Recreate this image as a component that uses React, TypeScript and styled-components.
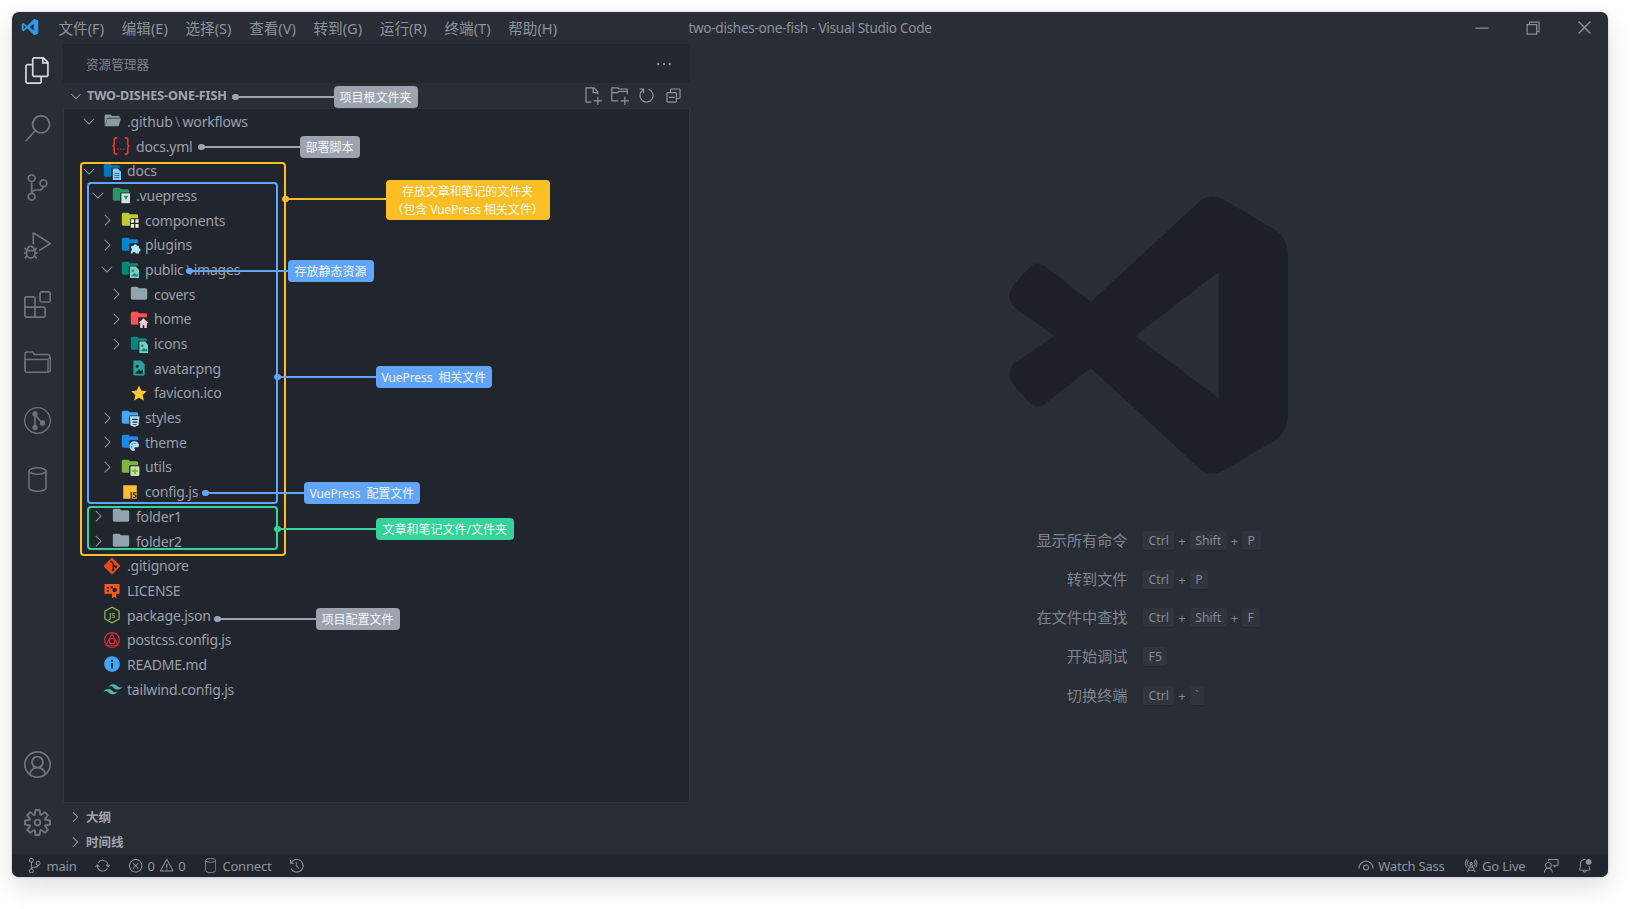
import React from "react";
import styled, { createGlobalStyle } from "styled-components";
import {
  VscFiles, VscSearch, VscSourceControl, VscDebugAlt, VscExtensions, VscAccount, VscSettingsGear,
  VscChevronRight, VscChevronDown, VscNewFile, VscNewFolder, VscRefresh, VscCollapseAll, VscEllipsis,
  VscChromeMinimize, VscChromeRestore, VscChromeClose, VscSync, VscError, VscWarning, VscHistory,
  VscRadioTower, VscFeedback, VscBellDot,
} from "react-icons/vsc";

const TREE_BG = "#21252d";
const WINDOW_BG = "#292d36";
const FONT = `"Noto Sans", "Noto Sans CJK SC", sans-serif`;

const Global = createGlobalStyle`
  html, body { margin: 0; padding: 0; background: #fff; }
  body { font-family: ${FONT}; width: 1640px; height: 909px; overflow: hidden; }
  * { box-sizing: border-box; }
`;

const Page = styled.div`
  position: relative;
  width: 1640px;
  height: 909px;
  padding: 12px 0 0 12px;
`;

const Window = styled.div`
  width: 1596px;
  height: 865px;
  display: flex;
  flex-direction: column;
  background: ${WINDOW_BG};
  border-radius: 7px;
  overflow: hidden;
  box-shadow: 0 10px 26px rgba(0, 0, 0, 0.13), 0 0 3px rgba(0, 0, 0, 0.18);
`;

const TitleBar = styled.header`
  height: 32px;
  padding-bottom: 3px;
  flex: none;
  display: grid;
  grid-template-columns: 1fr auto 1fr;
  align-items: center;
  color: #8d929c;
  font-size: 14.6px;
`;

const TitleLeft = styled.div`
  display: flex;
  align-items: center;
  padding-left: 9px;
`;

const Logo = styled.svg`
  width: 18px;
  height: 18px;
  margin-right: 19.5px;
  flex: none;
`;

const MenuItem = styled.span`
  margin-right: 17.7px;
  white-space: nowrap;
`;

const WindowTitle = styled.div`
  white-space: nowrap;
  font-size: 13.6px;
  letter-spacing: -0.3px;
`;

const Controls = styled.div`
  justify-self: end;
  display: flex;
  margin-right: -1.75px;
`;

const Control = styled.span`
  width: 51.5px;
  height: 30px;
  display: flex;
  align-items: center;
  justify-content: center;
  color: #8b8f98;
  font-size: 19px;
`;

const Body = styled.div`
  flex: 1;
  min-height: 0;
  display: flex;
`;

const ActivityBar = styled.nav`
  width: 51px;
  flex: none;
  display: flex;
  flex-direction: column;
  align-items: center;
  padding: 13px 0 18px;
  gap: 31.4px;
`;

const ActivityIcon = styled.span<{ $active?: boolean }>`
  height: 27px;
  width: 27px;
  display: flex;
  align-items: center;
  justify-content: center;
  color: ${(p) => (p.$active ? "#d5d8df" : "#6e737d")};
  font-size: 29px;
`;

const ActivitySpacer = styled.div`
  flex: 1;
`;

const SideBar = styled.aside`
  width: 627px;
  flex: none;
  display: flex;
  flex-direction: column;
`;

const SideHeader = styled.div`
  height: 39px;
  flex: none;
  background: #23272f;
  display: flex;
  align-items: center;
  justify-content: space-between;
  padding: 0 17px 0 23px;
  color: #7d828c;
  font-size: 12.6px;
`;

const MoreIcon = styled.span`
  display: flex;
  color: #9ba0aa;
  font-size: 18px;
`;

const SectionHeader = styled.div`
  height: 25px;
  flex: none;
  display: flex;
  align-items: center;
  padding-left: 4px;
  color: #a0a5af;
  font-size: 12.6px;
  font-weight: 700;
  letter-spacing: -0.1px;
`;

const SectionChevron = styled.span`
  width: 18px;
  display: flex;
  justify-content: center;
  font-size: 16px;
  color: #a0a5af;
  margin-right: 2px;
`;

const SectionTools = styled.div`
  margin-left: auto;
  margin-right: 7px;
  display: flex;
  gap: 8px;
  color: #8f949e;
  font-size: 19px;
`;

const ToolIcon = styled.span`
  width: 19px;
  display: flex;
  justify-content: center;
`;

const Tree = styled.div`
  flex: 1;
  min-height: 0;
  background: ${TREE_BG};
  border: 1px solid #2f333d;
`;

const Row = styled.div<{ $level: number }>`
  height: 24.7px;
  display: flex;
  align-items: center;
  padding-left: ${(p) => 16 + (p.$level - 1) * 9}px;
  color: #9aa0ab;
  font-size: 14px;
  letter-spacing: -0.2px;
  white-space: nowrap;
`;

const Twistie = styled.span`
  width: 18px;
  flex: none;
  display: flex;
  justify-content: center;
  font-size: 18px;
  color: #8e949f;
`;

const NodeIcon = styled.svg`
  width: 18px;
  height: 18px;
  flex: none;
  margin: 0 6.5px 0 4.5px;
  overflow: visible;
`;

const PathSep = styled.span`
  margin: 0 2.5px;
  opacity: 0.7;
`;

const Collapsed = styled.div`
  flex: none;
  padding-top: 2px;
`;

const CollapsedRow = styled.div`
  height: 24.75px;
  display: flex;
  align-items: center;
  padding-left: 3px;
  color: #a0a5af;
  font-size: 12.5px;
  font-weight: 700;
`;

const Editor = styled.main`
  flex: 1;
  min-width: 0;
  padding-top: 152px;
`;

const Watermark = styled.svg`
  display: block;
  width: 279px;
  height: 278px;
  margin: 0 0 45.6px 319px;
`;

const Shortcuts = styled.dl`
  margin: 0;
  display: grid;
  grid-template-columns: 437.5px auto;
  column-gap: 15.5px;
  grid-auto-rows: 38.75px;
  align-items: center;
`;

const ShortcutLabel = styled.dt`
  justify-self: end;
  color: #80858f;
  font-size: 15.2px;
`;

const ShortcutKeys = styled.dd`
  margin: 0;
  padding-top: 4px;
  display: flex;
  align-items: center;
  color: #80858f;
  font-size: 13px;
`;

const Kbd = styled.kbd`
  font-family: ${FONT};
  height: 20px;
  padding: 0 5.6px;
  display: inline-flex;
  align-items: center;
  background: #30343d;
  border-bottom: 1px solid #23262d;
  border-radius: 3px;
  color: #858a94;
  font-size: 12.2px;
`;

const Plus = styled.span`
  width: 15.2px;
  text-align: center;
`;

const StatusBar = styled.footer`
  height: 23px;
  flex: none;
  background: ${TREE_BG};
  display: flex;
  align-items: center;
  justify-content: space-between;
  padding: 0 15.5px 0 15px;
  color: #8f949e;
  font-size: 13px;
  letter-spacing: -0.2px;
`;

const StatusGroup = styled.div<{ $gap: number }>`
  display: flex;
  align-items: center;
  gap: ${(p) => p.$gap}px;
`;

const StatusItem = styled.span<{ $wide?: boolean }>`
  display: flex;
  align-items: center;
  gap: ${(p) => (p.$wide ? 6 : 4)}px;
  margin-left: ${(p) => (p.$wide ? 1.5 : 0)}px;
  white-space: nowrap;
  svg { font-size: 15.5px; flex: none; }
`;

const Box = styled.div<{ $x: number; $y: number; $w: number; $h: number; $c: string }>`
  position: absolute;
  left: ${(p) => p.$x}px;
  top: ${(p) => p.$y}px;
  width: ${(p) => p.$w}px;
  height: ${(p) => p.$h}px;
  border: 2px solid ${(p) => p.$c};
  border-radius: 4px;
`;

const Callout = styled.div<{ $x: number; $y: number; $c: string }>`
  position: absolute;
  left: ${(p) => p.$x - 3}px;
  top: ${(p) => p.$y}px;
  height: 0;
  display: flex;
  align-items: center;
  color: ${(p) => p.$c};
`;

const Dot = styled.span`
  width: 6.5px;
  height: 6.5px;
  flex: none;
  border-radius: 50%;
  background: currentColor;
`;

const Wire = styled.span<{ $len: number }>`
  width: ${(p) => p.$len}px;
  height: 2px;
  flex: none;
  margin-left: -1px;
  background: currentColor;
`;

const Label = styled.span<{ $c: string; $pad?: number; $track?: number }>`
  flex: none;
  background: ${(p) => p.$c};
  color: #f3f4f6;
  border-radius: 4px;
  padding: 0 ${(p) => p.$pad ?? 6}px;
  height: 22px;
  display: flex;
  align-items: center;
  font-size: 12px;
  letter-spacing: ${(p) => p.$track ?? 0}px;
  white-space: pre;
`;

const TwoLineLabel = styled(Label)`
  width: 164px;
  height: 40px;
  margin-top: 2px;
  padding: 1px 0 0;
  flex-direction: column;
  justify-content: center;
  line-height: 18px;
  letter-spacing: -0.1px;
`;

const Hole = ({ x, y, w, h }: { x: number; y: number; w: number; h: number }) => (
  <rect x={x} y={y} width={w} height={h} rx={1.5} fill={TREE_BG} />
);

const Folder = ({ color, children }: { color: string; children?: React.ReactNode }) => (
  <NodeIcon viewBox="1 2 22 22">
    <path d="M10 4H4c-1.100 0-2 .9-2 2v12c0 1.100.9 2 2 2h16c1.100 0 2-.9 2-2V8c0-1.100-.9-2-2-2h-8l-2-2z" fill={color} />
    {children}
  </NodeIcon>
);

const Glyph = ({ children }: { children: React.ReactNode }) => <NodeIcon viewBox="0 0 24 24">{children}</NodeIcon>;

const icons: Record<string, React.ReactNode> = {
  github: (
    <NodeIcon viewBox="1 2 22 22">
      <path d="M4 5h6l2 2h8a2 2 0 0 1 2 2H6.500L3 19V6a1 1 0 0 1 1-1z" fill="#8b9aa1" />
      <path d="M6.500 10H23l-3 9.500H3.200z" fill="#8b9aa1" />
    </NodeIcon>
  ),
  docs: (
    <Folder color="#0277bd">
      <Hole x={11} y={9} w={12} h={15} />
      <path d="M13 10h6l4 4v10H13z" fill="#90caf9" />
      <path d="M15 16h6M15 18.500h6M15 21h6" stroke="#0277bd" strokeWidth="1.200" />
    </Folder>
  ),
  vuepress: (
    <Folder color="#2e9468">
      <Hole x={11} y={10} w={13} h={14} />
      <rect x="12.500" y="11" width="10.500" height="12" fill="#cfe8dc" />
      <path d="M15 14h6l-3 5z" fill="#2e9468" />
    </Folder>
  ),
  components: (
    <Folder color="#c0ca33">
      <Hole x={12} y={11} w={12} h={13} />
      <path d="M13 12h4v4.500h-4zM18.500 12h4v4.500h-4zM13 18h4v4.500h-4zM18.500 18h4v4.500h-4z" fill="#f0f4c3" />
    </Folder>
  ),
  plugins: (
    <Folder color="#0288d1">
      <Hole x={11} y={11} w={13} h={13} />
      <path d="M14 14h2.500a2 2 0 0 1 4 0H23v3a2 2 0 0 1 0 4v2.500h-4a2 2 0 0 0-4 0h-2v-3a2.200 2.200 0 0 0 0-4z" fill="#b3e5fc" />
    </Folder>
  ),
  public: (
    <Folder color="#00897b">
      <Hole x={10.5} y={9} w={13} h={15} />
      <path d="M12 10h7l4 4v10H12z" fill="#80cbc4" />
      <circle cx="15.500" cy="15" r="1.500" fill="#00897b" />
      <path d="M13.500 22l4-4 2 2 2-1.500V22z" fill="#00897b" />
    </Folder>
  ),
  grey: <Folder color="#90a4ae" />,
  home: (
    <Folder color="#ff5252">
      <Hole x={11} y={11} w={13} h={13} />
      <path d="M17.500 12l6 6h-2v6h-3v-3.500h-2V24h-3v-6h-2z" fill="#ffcdd2" />
    </Folder>
  ),
  icons: (
    <Folder color="#00897b">
      <Hole x={11} y={9} w={13} h={15} />
      <path d="M12.500 10h7l3.500 4v10H12.500z" fill="#80cbc4" />
      <circle cx="16" cy="15" r="1.500" fill="#00897b" />
      <path d="M14 22l4-4 2 2 2-1.500V22z" fill="#00897b" />
    </Folder>
  ),
  styles: (
    <Folder color="#42a5f5">
      <Hole x={11} y={10} w={13} h={14} />
      <path d="M12 11h11.500l-1 11-5 2-5-2zM14.500 14v1.500h7V14zM15 17.200v1.500h6v-1.500zM15.500 20.300v.7l2 .7 2.500-.7v-.7z" fill="#bbdefb" fillRule="evenodd" />
    </Folder>
  ),
  theme: (
    <Folder color="#1e88e5">
      <Hole x={11} y={11} w={13} h={13} />
      <path d="M17.500 12a6 6 0 1 0-.6 12c1.600 0 1.400-2 .6-2.600-.6-.8 0-1.900 1-1.900h2.200c1.500 0 2.300-1 2.300-2.300 0-3-2.500-5.200-5.500-5.200z" fill="#bbdefb" />
      <circle cx="14.500" cy="15.500" r="1" fill="#1e88e5" />
      <circle cx="18" cy="14.500" r="1" fill="#1e88e5" />
      <circle cx="14" cy="19" r="1" fill="#1e88e5" />
    </Folder>
  ),
  utils: (
    <Folder color="#7cb342">
      <Hole x={11} y={11} w={13} h={13} />
      <rect x="12.500" y="12" width="11" height="12" rx="1.500" fill="#c5e1a5" />
      <path d="M18 14.500v7M14.500 18h7" stroke="#7cb342" strokeWidth="2" />
    </Folder>
  ),
  yml: (
    <NodeIcon viewBox="2 2 20 20">
      <path d="M8 3H6.500C5 3 4.500 4 4.500 5v4.500C4.500 11 3.500 12 2.500 12c1 0 2 1 2 2.500V19c0 1 .5 2 2 2H8M16 3h1.500c1.500 0 2 1 2 2v4.500c0 1.500 1 2.500 2 2.500-1 0-2 1-2 2.500V19c0 1-.5 2-2 2H16" fill="none" stroke="#e53935" strokeWidth="1.800" />
      <path d="M8 15.500h1.500M11.300 15.500h1.500M14.600 15.500h1.500" stroke="#e53935" strokeWidth="1.600" />
    </NodeIcon>
  ),
  png: (
    <Glyph>
      <path d="M6 2h8.500L19.500 7v15h-13.500a1.500 1.500 0 0 1-1.500-1.500v-17A1.500 1.500 0 0 1 6 2z" fill="#26a69a" />
      <circle cx="9.500" cy="9.500" r="2" fill={TREE_BG} />
      <path d="M6.500 19.500l5.500-6 2.500 2.500 2.500-2v5.500z" fill={TREE_BG} />
    </Glyph>
  ),
  star: (
    <Glyph>
      <path d="M12 2l3 6.800 7.300.8-5.400 5 1.500 7.300L12 18.200l-6.400 3.700 1.500-7.300-5.400-5 7.300-.8z" fill="#fcc934" />
    </Glyph>
  ),
  js: (
    <Glyph>
      <rect x="3" y="3" width="18" height="18" fill="#fbc02d" />
      <text x="20.500" y="20" textAnchor="end" fontSize="11" fontWeight="700" fontFamily={FONT} letterSpacing="-0.5" fill="#2a2d33">JS</text>
    </Glyph>
  ),
  git: (
    <Glyph>
      <path d="M11 1.500a1.500 1.500 0 0 1 2 0l9.500 9.500a1.500 1.500 0 0 1 0 2L13 22.500a1.500 1.500 0 0 1-2 0L1.500 13a1.500 1.500 0 0 1 0-2z" fill="#e64a19" />
      <path d="M10 5l3.500 3.500v8M13.500 10l3 3" stroke={TREE_BG} strokeWidth="1.700" fill="none" />
      <circle cx="13.500" cy="17" r="1.800" fill={TREE_BG} />
      <circle cx="16.800" cy="13.200" r="1.800" fill={TREE_BG} />
    </Glyph>
  ),
  license: (
    <Glyph>
      <path d="M2 4h20v13h-4.500l.5 6-3-2-3 2v-6H2z" fill="#ff5722" />
      <path d="M5 8h3v2H5zM5 12h3v2H5zM10 7h3v3h-3z" fill={TREE_BG} />
      <circle cx="15.500" cy="12" r="3" fill={TREE_BG} />
    </Glyph>
  ),
  node: (
    <Glyph>
      <path d="M12 1.500l9.500 5.300v10.400L12 22.500l-9.500-5.300V6.800z" fill="none" stroke="#8bc34a" strokeWidth="1.600" />
      <text x="12" y="16" textAnchor="middle" fontSize="9.500" fontWeight="600" fontFamily={FONT} fill="#8bc34a">JS</text>
    </Glyph>
  ),
  postcss: (
    <Glyph>
      <circle cx="12" cy="12" r="9.800" fill="none" stroke="#d32f2f" strokeWidth="1.700" />
      <path d="M12 3.500L20 19H4z" fill="none" stroke="#d32f2f" strokeWidth="1.500" />
      <circle cx="12" cy="13.500" r="3.500" fill="none" stroke="#d32f2f" strokeWidth="1.500" />
    </Glyph>
  ),
  readme: (
    <Glyph>
      <circle cx="12" cy="12" r="10.500" fill="#42a5f5" />
      <rect x="10.800" y="10.500" width="2.400" height="7.500" fill={TREE_BG} />
      <rect x="10.800" y="6.500" width="2.400" height="2.400" fill={TREE_BG} />
    </Glyph>
  ),
  tailwind: (
    <Glyph>
      <path d="M12 5.500c-3.500 0-5.500 1.700-6.500 4.800 1.300-1.700 2.800-2.300 4.500-1.900 1 .3 1.700 1 2.500 1.800 1.200 1.200 2.700 2.500 5.500 2.500 3.500 0 5.500-1.700 6.500-4.800-1.300 1.700-2.800 2.300-4.500 1.900-1-.3-1.700-1-2.500-1.800-1.200-1.200-2.700-2.500-5.500-2.500zM5.500 12c-3.500 0-5.500 1.700-6.500 4.800 1.300-1.700 2.800-2.300 4.500-1.900 1 .3 1.700 1 2.500 1.800 1.200 1.200 2.700 2.500 5.500 2.500 3.500 0 5.500-1.700 6.500-4.800-1.300 1.700-2.800 2.300-4.500 1.900-1-.3-1.700-1-2.500-1.800C9.800 13.300 8.300 12 5.500 12z" fill="#4db6ac" transform="translate(1.500 0)" />
    </Glyph>
  ),
};

type Node = { level: number; name: React.ReactNode; icon: string; twistie?: "open" | "closed" };

const nodes: Node[] = [
  { level: 1, twistie: "open", icon: "github", name: <>.github<PathSep>\</PathSep>workflows</> },
  { level: 2, icon: "yml", name: "docs.yml" },
  { level: 1, twistie: "open", icon: "docs", name: "docs" },
  { level: 2, twistie: "open", icon: "vuepress", name: ".vuepress" },
  { level: 3, twistie: "closed", icon: "components", name: "components" },
  { level: 3, twistie: "closed", icon: "plugins", name: "plugins" },
  { level: 3, twistie: "open", icon: "public", name: <>public<PathSep>\</PathSep>images</> },
  { level: 4, twistie: "closed", icon: "grey", name: "covers" },
  { level: 4, twistie: "closed", icon: "home", name: "home" },
  { level: 4, twistie: "closed", icon: "icons", name: "icons" },
  { level: 4, icon: "png", name: "avatar.png" },
  { level: 4, icon: "star", name: "favicon.ico" },
  { level: 3, twistie: "closed", icon: "styles", name: "styles" },
  { level: 3, twistie: "closed", icon: "theme", name: "theme" },
  { level: 3, twistie: "closed", icon: "utils", name: "utils" },
  { level: 3, icon: "js", name: "config.js" },
  { level: 2, twistie: "closed", icon: "grey", name: "folder1" },
  { level: 2, twistie: "closed", icon: "grey", name: "folder2" },
  { level: 1, icon: "git", name: ".gitignore" },
  { level: 1, icon: "license", name: "LICENSE" },
  { level: 1, icon: "node", name: "package.json" },
  { level: 1, icon: "postcss", name: "postcss.config.js" },
  { level: 1, icon: "readme", name: "README.md" },
  { level: 1, icon: "tailwind", name: "tailwind.config.js" },
];

const menus = ["文件(F)", "编辑(E)", "选择(S)", "查看(V)", "转到(G)", "运行(R)", "终端(T)", "帮助(H)"];

const shortcuts: { label: string; keys: string[] }[] = [
  { label: "显示所有命令", keys: ["Ctrl", "Shift", "P"] },
  { label: "转到文件", keys: ["Ctrl", "P"] },
  { label: "在文件中查找", keys: ["Ctrl", "Shift", "F"] },
  { label: "开始调试", keys: ["F5"] },
  { label: "切换终端", keys: ["Ctrl", "`"] },
];

const GREY = "#9ca3af";
const BLUE = "#60a5fa";
const AMBER = "#fbbf24";
const GREEN = "#34d399";

const boxes = [
  { x: 80, y: 162, w: 206, h: 394, c: AMBER },
  { x: 87, y: 182, w: 191, h: 322, c: BLUE },
  { x: 87, y: 506, w: 191, h: 44, c: GREEN },
];

const callouts = [
  { x: 235, y: 97, len: 96, c: GREY, text: "项目根文件夹" },
  { x: 201, y: 147, len: 96, c: GREY, text: "部署脚本" },
  { x: 189, y: 271, len: 96, c: BLUE, text: "存放静态资源", pad: 7 },
  { x: 277, y: 377, len: 96, c: BLUE, text: "VuePress  相关文件", track: -0.08 },
  { x: 205, y: 493, len: 96, c: BLUE, text: "VuePress  配置文件", track: -0.08 },
  { x: 277, y: 529, len: 96, c: GREEN, text: "文章和笔记文件/文件夹", pad: 7 },
  { x: 217, y: 619, len: 96, c: GREY, text: "项目配置文件" },
];

const ProjectsIcon = () => (
  <svg width="27" height="22" viewBox="0 0 27 22" fill="none" stroke="currentColor" strokeWidth="1.400">
    <path d="M1 20.300V2.500A1.500 1.500 0 0 1 2.500 1h6l2 2.500H24a1.500 1.500 0 0 1 1.500 1.500V8" />
    <path d="M1 8.500h23v12.800H2.500A1.500 1.500 0 0 1 1 19.800z" />
    <path d="M24 21.300l2.300-1.500V5" />
  </svg>
);

const GraphIcon = () => (
  <svg width="27" height="27" viewBox="0 0 27 27" fill="none" stroke="currentColor" strokeWidth="1.300">
    <circle cx="13.500" cy="13.500" r="12.800" />
    <path d="M11 7v13M11 7.500l7.500 9" strokeWidth="1.600" />
    <circle cx="11" cy="7" r="2" fill="currentColor" />
    <circle cx="18.500" cy="16" r="2" fill="currentColor" />
    <circle cx="11" cy="20.500" r="2" fill="currentColor" />
  </svg>
);

const DatabaseIcon = ({ size = 25 }: { size?: number }) => (
  <svg width={size * 0.76} height={size} viewBox="0 0 19 25" fill="none" stroke="currentColor" strokeWidth="1.500">
    <ellipse cx="9.500" cy="4" rx="8.500" ry="3.200" />
    <path d="M1 4v17c0 1.800 3.800 3.200 8.500 3.200S18 22.800 18 21V4" />
  </svg>
);

const WatchIcon = () => (
  <svg width="16" height="13" viewBox="0 0 16 13" fill="none" stroke="currentColor" strokeWidth="1.100">
    <path d="M1 9.500A7.400 7.400 0 0 1 8 2a7.400 7.400 0 0 1 7 7.500" />
    <circle cx="8" cy="8.500" r="2.500" />
  </svg>
);

export default function App() {
  return (
    <Page>
      <Global />
      <Window>
        <TitleBar>
          <TitleLeft>
            <Logo viewBox="0 0 24 24">
              <path d="M17.600 1L8.300 10.200 3.500 6.500 1 7.800v8.400l2.500 1.300 4.800-3.700L17.600 23 23 20.700V3.300zM3.500 15V9l3 3zM17 16.500L11.500 12 17 7.500z" fill="#2f9be6" fillRule="evenodd" />
            </Logo>
            {menus.map((m) => <MenuItem key={m}>{m}</MenuItem>)}
          </TitleLeft>
          <WindowTitle>two-dishes-one-fish - Visual Studio Code</WindowTitle>
          <Controls>
            <Control><VscChromeMinimize /></Control>
            <Control><VscChromeRestore /></Control>
            <Control><VscChromeClose /></Control>
          </Controls>
        </TitleBar>
        <Body>
          <ActivityBar>
            <ActivityIcon $active><VscFiles /></ActivityIcon>
            <ActivityIcon><VscSearch /></ActivityIcon>
            <ActivityIcon><VscSourceControl /></ActivityIcon>
            <ActivityIcon><VscDebugAlt /></ActivityIcon>
            <ActivityIcon><VscExtensions /></ActivityIcon>
            <ActivityIcon><ProjectsIcon /></ActivityIcon>
            <ActivityIcon><GraphIcon /></ActivityIcon>
            <ActivityIcon><DatabaseIcon /></ActivityIcon>
            <ActivitySpacer />
            <ActivityIcon><VscAccount /></ActivityIcon>
            <ActivityIcon><VscSettingsGear /></ActivityIcon>
          </ActivityBar>
          <SideBar>
            <SideHeader>
              资源管理器
              <MoreIcon><VscEllipsis /></MoreIcon>
            </SideHeader>
            <SectionHeader>
              <SectionChevron><VscChevronDown /></SectionChevron>
              TWO-DISHES-ONE-FISH
              <SectionTools>
                <ToolIcon><VscNewFile /></ToolIcon>
                <ToolIcon><VscNewFolder /></ToolIcon>
                <ToolIcon><VscRefresh /></ToolIcon>
                <ToolIcon><VscCollapseAll /></ToolIcon>
              </SectionTools>
            </SectionHeader>
            <Tree>
              {nodes.map((n, i) => (
                <Row key={i} $level={n.level}>
                  <Twistie>
                    {n.twistie === "open" && <VscChevronDown />}
                    {n.twistie === "closed" && <VscChevronRight />}
                  </Twistie>
                  {icons[n.icon]}
                  <span>{n.name}</span>
                </Row>
              ))}
            </Tree>
            <Collapsed>
              <CollapsedRow><SectionChevron><VscChevronRight /></SectionChevron>大纲</CollapsedRow>
              <CollapsedRow><SectionChevron><VscChevronRight /></SectionChevron>时间线</CollapsedRow>
            </Collapsed>
          </SideBar>
          <Editor>
            <Watermark viewBox="0 0 281 278" preserveAspectRatio="none">
              <path
                fillRule="evenodd"
                fill="#1d2028"
                d="M82.400 106L192.700 4.700Q203 -3 216 3.500L265 32Q281 41 281 60V218Q281 237 265 246L216 274.500Q203 281 192.700 273.300L82.400 172L36 208Q27 214 20 206L4 188Q-3 178 4 168L45.500 140L4 110Q-3 100 4 90L20 72Q27 64 36 70zM211 76L127 140L211 202z"
              />
            </Watermark>
            <Shortcuts>
              {shortcuts.map((s) => (
                <React.Fragment key={s.label}>
                  <ShortcutLabel>{s.label}</ShortcutLabel>
                  <ShortcutKeys>
                    {s.keys.map((k, i) => (
                      <React.Fragment key={k}>
                        {i > 0 && <Plus>+</Plus>}
                        <Kbd>{k}</Kbd>
                      </React.Fragment>
                    ))}
                  </ShortcutKeys>
                </React.Fragment>
              ))}
            </Shortcuts>
          </Editor>
        </Body>
        <StatusBar>
          <StatusGroup $gap={18}>
            <StatusItem><VscSourceControl />main</StatusItem>
            <StatusItem><VscSync /></StatusItem>
            <StatusItem><VscError />0<VscWarning />0</StatusItem>
            <StatusItem $wide><DatabaseIcon size={15} />Connect</StatusItem>
            <StatusItem><VscHistory /></StatusItem>
          </StatusGroup>
          <StatusGroup $gap={18}>
            <StatusItem><WatchIcon />Watch Sass</StatusItem>
            <StatusItem><VscRadioTower />Go Live</StatusItem>
            <StatusItem><VscFeedback /></StatusItem>
            <StatusItem><VscBellDot /></StatusItem>
          </StatusGroup>
        </StatusBar>
      </Window>

      {boxes.map((b, i) => <Box key={i} $x={b.x} $y={b.y} $w={b.w} $h={b.h} $c={b.c} />)}
      {callouts.map((c) => (
        <Callout key={c.text} $x={c.x} $y={c.y} $c={c.c}>
          <Dot />
          <Wire $len={c.len} />
          <Label $c={c.c} $pad={c.pad} $track={c.track}>{c.text}</Label>
        </Callout>
      ))}
      <Callout $x={285} $y={199} $c={AMBER}>
        <Dot />
        <Wire $len={98} />
        <TwoLineLabel $c={AMBER}>
          <span>存放文章和笔记的文件夹</span>
          <span>（包含 VuePress 相关文件）</span>
        </TwoLineLabel>
      </Callout>
    </Page>
  );
}
